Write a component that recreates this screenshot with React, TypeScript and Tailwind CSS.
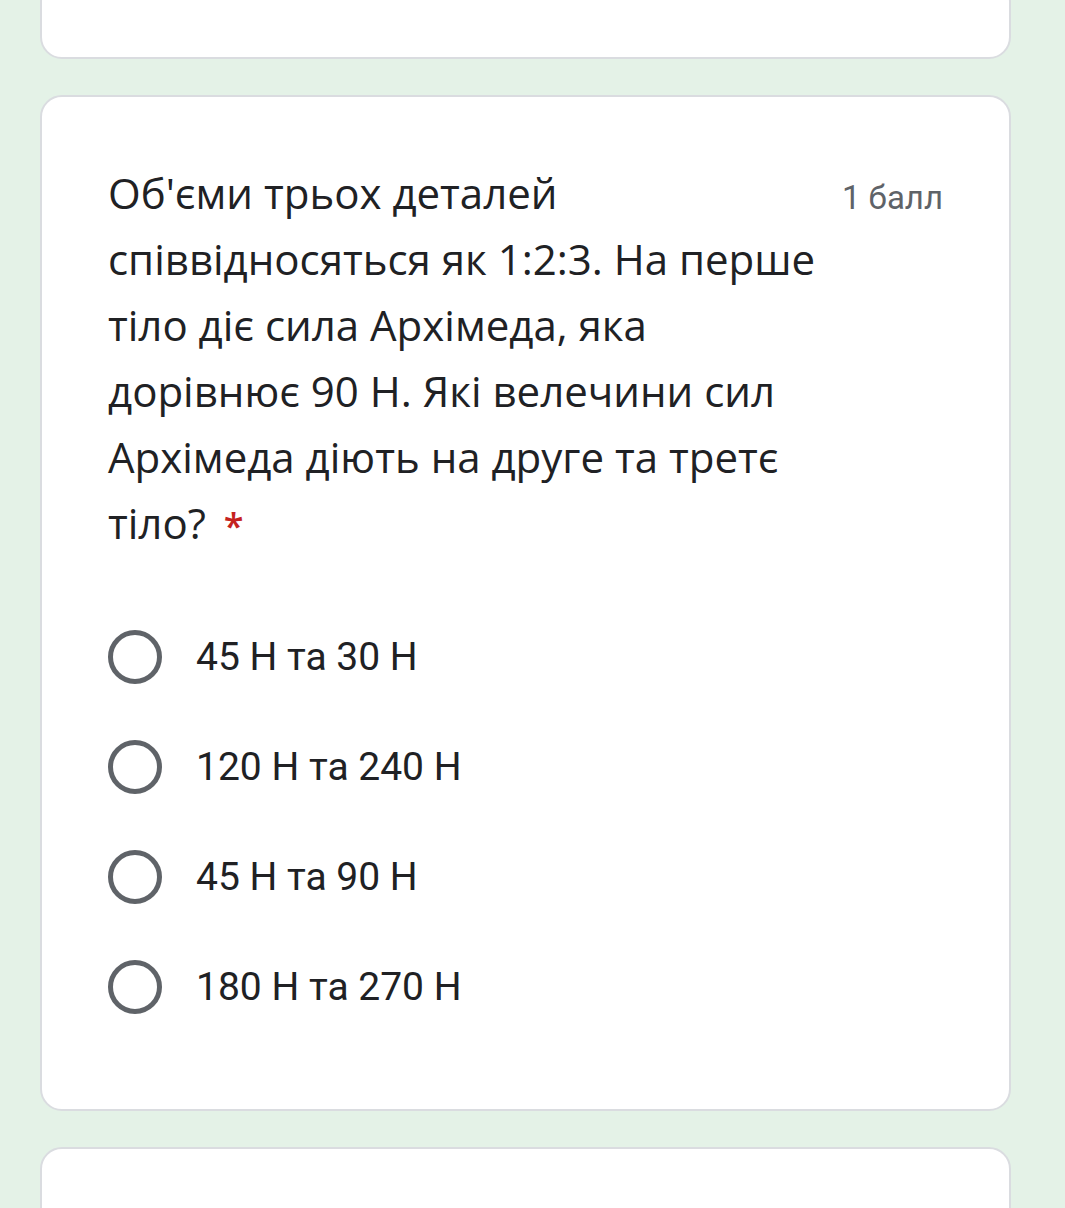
import React from "react";

const options = ["45 Н та 30 Н", "120 Н та 240 Н", "45 Н та 90 Н", "180 Н та 270 Н"];

export default function App() {
  return (
    <div className="w-[1065px] h-[1208px] overflow-hidden bg-[#e4f2e7] flex flex-col gap-[36px] px-[40px]">
      <div className="h-[79px] -mt-[20px] shrink-0 bg-white border-2 border-[#dadce0] rounded-[22px] w-[971px]" />
      <div className="shrink-0 bg-white border-2 border-[#dadce0] rounded-[22px] w-[971px] h-[1016px] pl-[66px] pr-[66px] pt-[63px]">
        <div className="flex justify-between">
          <div
            className="text-[42px] leading-[66px] text-[#202124] w-[720px]"
            style={{ fontFamily: '"Open Sans", "Noto Sans", sans-serif' }}
          >
            Об'єми трьох деталей
            <br />
            співвідносяться як 1:2:3. На перше
            <br />
            тіло діє сила Архімеда, яка
            <br />
            дорівнює 90 Н. Які велечини сил
            <br />
            Архімеда діють на друге та третє
            <br />
            тіло?<span className="text-[#c5221f] ml-[18px] text-[36px] font-semibold">*</span>
          </div>
          <div
            className="text-[33px] text-[#5f6368] pt-[18px] leading-[40px]"
            style={{ fontFamily: 'Roboto, sans-serif' }}
          >
            1 балл
          </div>
        </div>
        <div className="mt-[71px] flex flex-col gap-[56px]">
          {options.map((o) => (
            <div key={o} className="flex items-center h-[54px]">
              <div className="w-[54px] h-[54px] rounded-full border-[5px] border-[#5f6368] shrink-0" />
              <div
                className="ml-[34px] text-[39px] text-[#202124]"
                style={{ fontFamily: 'Roboto, sans-serif' }}
              >
                {o}
              </div>
            </div>
          ))}
        </div>
      </div>
      <div className="h-[200px] shrink-0 bg-white border-2 border-[#dadce0] rounded-[22px] w-[971px]" />
    </div>
  );
}
